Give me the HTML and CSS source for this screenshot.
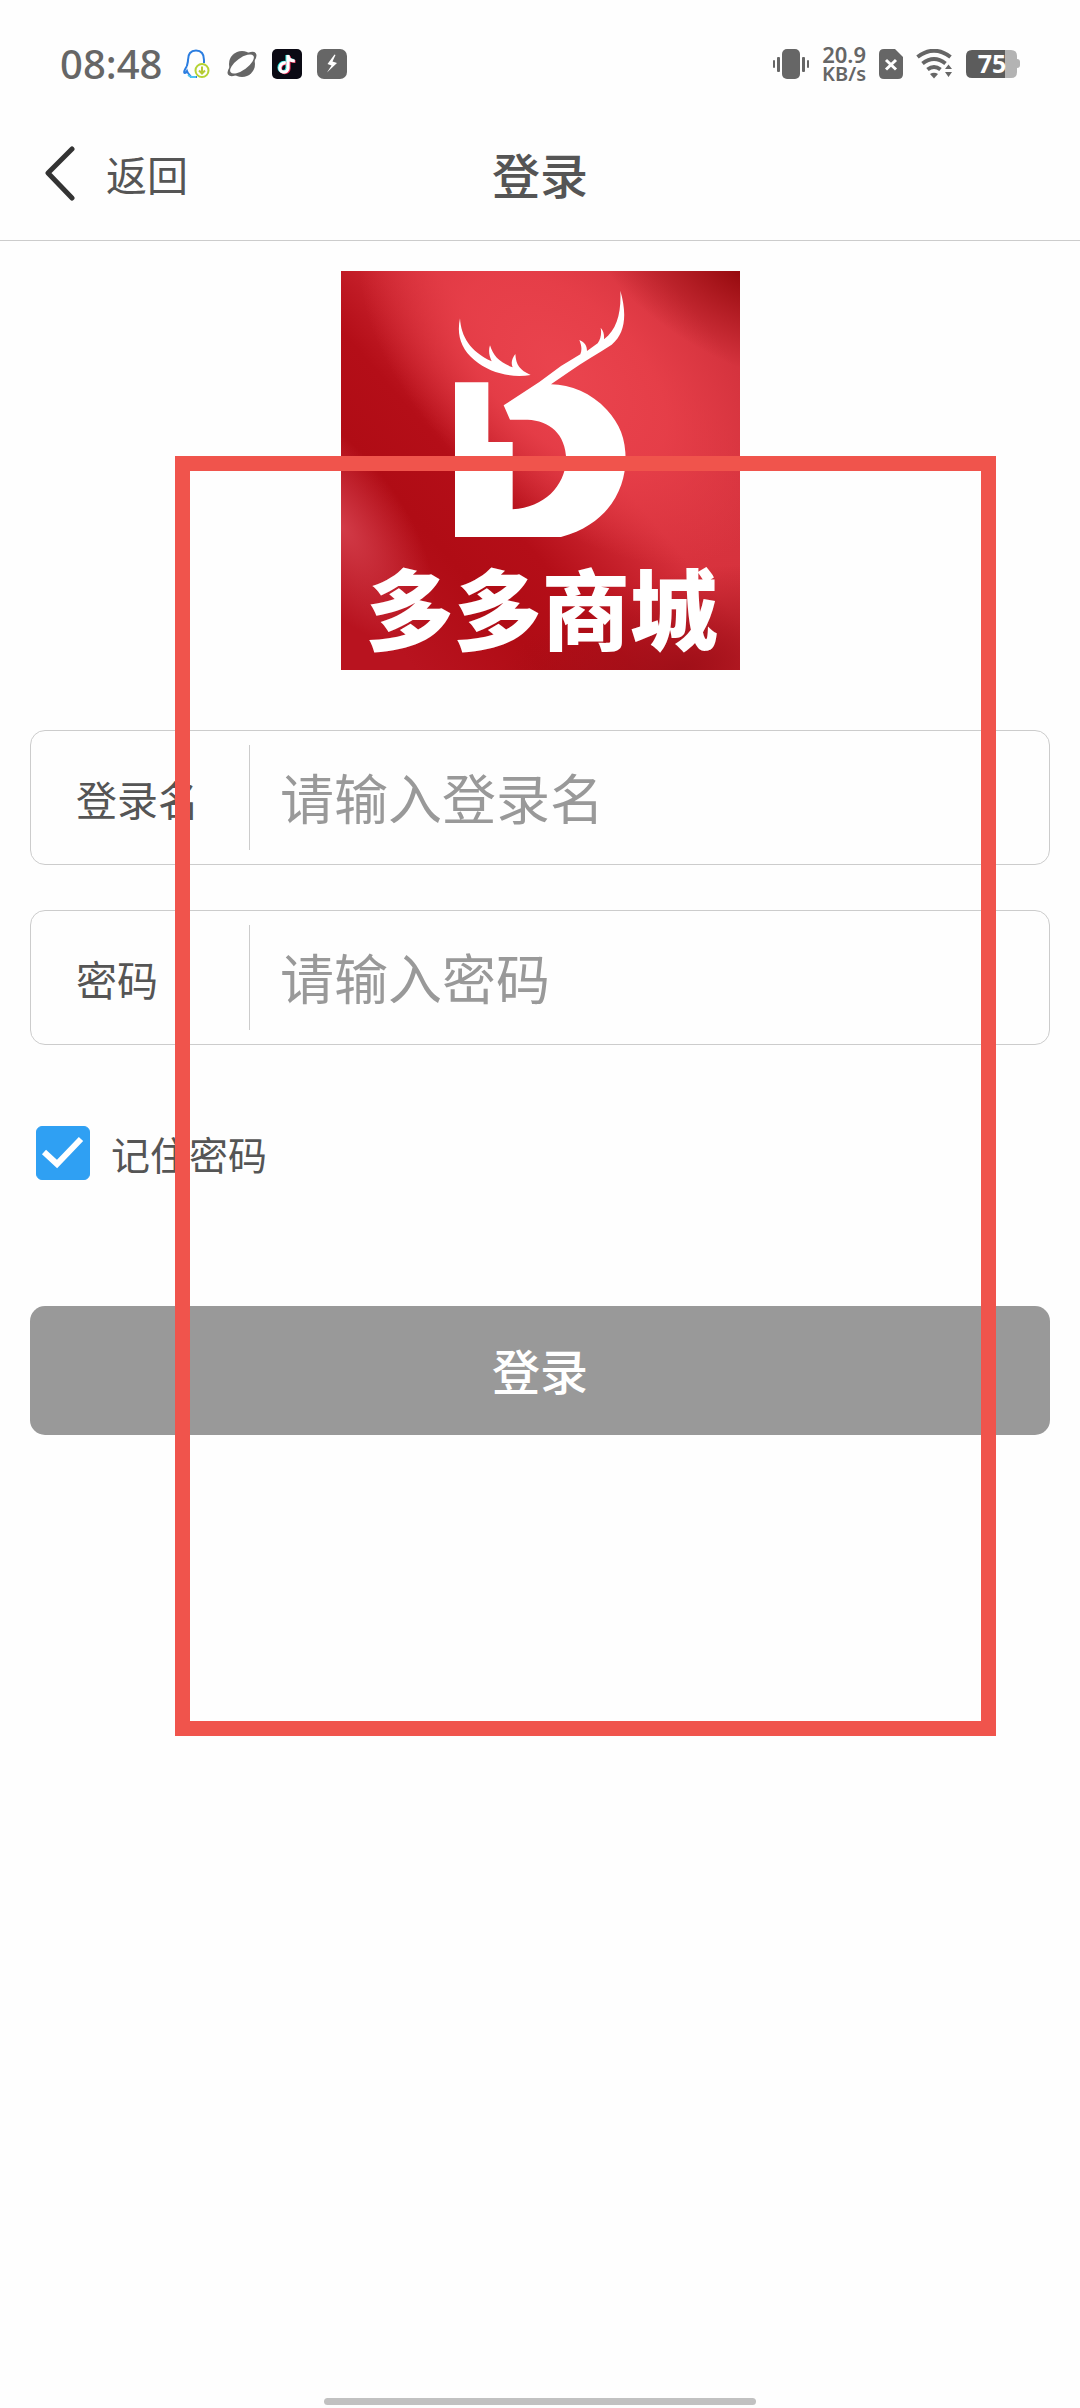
FILE: index.html
```html
<!DOCTYPE html>
<html lang="zh-CN">
<head>
    <meta charset="UTF-8">
    <meta name="viewport" content="width=device-width, initial-scale=1.0">
    <title>登录</title>
    <link rel="stylesheet" href="styles.css">
</head>
<body>
    <div class="status-bar">
        <div class="status-left">
            <span class="time">08:48</span>
            <svg width="30" height="30" viewBox="0 0 30 30" fill="none">
                <path d="M5 17C3 20 1 24 3 24C4 24 5 22 5 22C6 25 8 26 9 28H15M5 17C5 15 6 14 6 11C6 5 9 1.500 14 1.500C19.500 1.500 22 5 22 11V14" stroke="#2b7de0" stroke-width="2"/>
                <path d="M6 26L9 28H14" stroke="#4cc3f0" stroke-width="2"/>
                <circle cx="20" cy="21.500" r="6.500" fill="#fefefe" stroke="#b5d334" stroke-width="2"/>
                <path d="M20 17.500V24M17 21.500L20 24.500L23 21.500" stroke="#b5c934" stroke-width="2"/>
            </svg>
            <svg width="30" height="30" viewBox="0 0 30 30">
                <circle cx="15" cy="15" r="13" fill="#666"/>
                <ellipse cx="15" cy="15" rx="17.500" ry="7" transform="rotate(-38 15 15)" fill="#666"/>
                <ellipse cx="15" cy="15" rx="14" ry="6" transform="rotate(-36 15 15)" fill="#fefefe"/>
            </svg>
            <svg width="30" height="30" viewBox="0 0 30 30" fill="none" stroke-width="3.200">
                <rect width="30" height="30" rx="5" fill="#0b0a14"/>
                <path d="M13 13.500C9 13 7 16 7 18.500C7 24 15 24 15 18.500V6C15.500 9.500 18 11.500 22 11.500" stroke="#25e0dc"/>
                <path d="M14.500 14.500C10.500 14 8.500 17 8.500 19.500C8.500 25 17 25 17 19.500V7C17 10.500 19.500 12.500 23.500 12.500" stroke="#f02c56"/>
                <path d="M13.800 14C9.800 13.500 7.800 16.500 7.800 19C7.800 24.500 16 24.500 16 19V6C16 10 18.800 12 22.800 12" stroke="#fff"/>
            </svg>
            <svg width="30" height="30" viewBox="0 0 30 30">
                <rect width="30" height="30" rx="7" fill="#666"/>
                <path d="M17.500 5.500L10.500 15L14.500 16.500L10 23.500L20 14L15.500 12.500L18.500 6Z" fill="#fff"/>
            </svg>
        </div>
        <div class="status-right">
            <svg width="36" height="30" viewBox="0 0 36 30" fill="#666">
                <rect x="9" width="18" height="30" rx="5"/>
                <rect y="11" width="2" height="8" rx="1"/>
                <rect x="4" y="8" width="3" height="15" rx="1"/>
                <rect x="29" y="8" width="3" height="15" rx="1"/>
                <rect x="34" y="11" width="2" height="8" rx="1"/>
            </svg>
            <div class="speed">
                <span>20.9</span>
                <span class="unit">KB/s</span>
            </div>
            <svg width="24" height="30" viewBox="0 0 24 30">
                <path d="M5 0H16L24 8V25Q24 30 19 30H5Q0 30 0 25V5Q0 0 5 0Z" fill="#666"/>
                <path d="M7 11L17 20.500M17 11L7 20.500" stroke="#fff" stroke-width="3"/>
            </svg>
            <svg width="37" height="30" viewBox="0 0 37 30" fill="none" stroke="#666" stroke-width="4">
                <path d="M1.500 8Q18 -4.500 34.500 8"/>
                <path d="M6.500 14.500Q18 5.500 29.500 14.500"/>
                <path d="M11.500 20.500Q18 15.500 24.500 20.500"/>
                <path d="M14 25Q18 22.500 22 25L18 29.500Z" fill="#666" stroke="none"/>
                <path d="M29 20L32.500 15.500L36 20ZM29 23L32.500 28L36 23Z" fill="#666" stroke="none"/>
            </svg>
            <svg width="54" height="28" viewBox="0 0 54 28">
                <path d="M38 0H45Q51 0 51 6V22Q51 28 45 28H38Z" fill="#b3b3b3"/>
                <path d="M51 9Q54 9 54 12V15Q54 18 51 18Z" fill="#b3b3b3"/>
                <path d="M6 0H39V28H6Q0 28 0 22V6Q0 0 6 0Z" fill="#5c5c5c"/>
                <text class="battery-level" x="26" y="23" text-anchor="middle">75</text>
            </svg>
        </div>
    </div>

    <header class="nav">
        <a class="back" href="#">
            <svg width="32" height="56" viewBox="0 0 32 56" fill="none" stroke="#333" stroke-width="5" stroke-linecap="round" stroke-linejoin="round">
                <path d="M28 4L4 28L28 53"/>
            </svg>
            <span>返回</span>
        </a>
        <h1 class="title">登录</h1>
    </header>

    <main class="content">
        <svg class="logo" viewBox="30 33 1197 1197">
            <defs>
                <linearGradient id="base" x1="0.100" y1="0.900" x2="0.850" y2="0.250">
                    <stop offset="0" stop-color="#b8131f"/>
                    <stop offset="0.250" stop-color="#b00c15"/>
                    <stop offset="0.420" stop-color="#b40e18"/>
                    <stop offset="0.700" stop-color="#d8323d"/>
                    <stop offset="1" stop-color="#d5333e"/>
                </linearGradient>
                <radialGradient id="shine" cx="0" cy="0" r="1" gradientTransform="translate(0.560 0.250) rotate(42) scale(0.620 0.340)">
                    <stop offset="0" stop-color="#ea444e"/>
                    <stop offset="0.500" stop-color="#e8404a" stop-opacity="0.850"/>
                    <stop offset="1" stop-color="#e8404a" stop-opacity="0"/>
                </radialGradient>
                <radialGradient id="left" cx="0" cy="0" r="1" gradientTransform="translate(0 0.640) rotate(55) scale(0.340 0.160)">
                    <stop offset="0" stop-color="#d23b48"/>
                    <stop offset="1" stop-color="#d23b48" stop-opacity="0"/>
                </radialGradient>
                <radialGradient id="corner" cx="0" cy="0" r="1" gradientTransform="translate(1 0) rotate(30) scale(0.450 0.220)">
                    <stop offset="0" stop-color="#960a0e"/>
                    <stop offset="1" stop-color="#960a0e" stop-opacity="0"/>
                </radialGradient>
                <radialGradient id="bottom" cx="0" cy="0" r="1" gradientTransform="translate(0.850 1) rotate(-15) scale(0.500 0.240)">
                    <stop offset="0" stop-color="#a00f18"/>
                    <stop offset="1" stop-color="#a00f18" stop-opacity="0"/>
                </radialGradient>
            </defs>
            <rect x="30" y="33" width="1197" height="1197" fill="url(#base)"/>
            <rect x="30" y="33" width="1197" height="1197" fill="url(#shine)"/>
            <rect x="30" y="33" width="1197" height="1197" fill="url(#left)"/>
            <rect x="30" y="33" width="1197" height="1197" fill="url(#corner)"/>
            <rect x="30" y="33" width="1197" height="1197" fill="url(#bottom)"/>
            <g fill="#fff">
                <!-- left antler, then the head with the right one -->
                <path d="M387 175C390 230 418 275 482 304C474 285 472 272 477 256C487 288 505 307 545 322C539 308 543 296 553 282C555 315 566 330 599 345C540 355 475 338 430 300C388 265 377 222 387 175Z"/>
                <path d="M868 92C888 160 884 220 842 254C800 282 755 306 718 333L660 373C720 375 780 398 828 450C866 492 884 535 884 600C882 680 840 790 690 831H372V367H472V546H545V748C640 742 700 680 706 600C704 520 655 482 590 479H537L518 436L625 366L690 318L748 283C754 268 751 255 745 240C762 247 768 258 768 273L800 250C810 235 812 220 809 203C818 213 820 225 819 238C858 207 871 160 868 92Z"/>
            </g>
            <text class="logo-text" x="632" y="1150" text-anchor="middle">多多商城</text>
        </svg>

        <form class="login-form" onsubmit="return false">
            <div class="field">
                <label for="username">登录名</label>
                <input type="text" id="username" placeholder="请输入登录名">
            </div>
            <div class="field">
                <label for="password">密码</label>
                <input type="password" id="password" placeholder="请输入密码">
            </div>
            <label class="remember">
                <span class="check">
                    <input type="checkbox" checked>
                    <svg viewBox="0 0 54 54" fill="none" stroke="#fff" stroke-width="6">
                        <path d="M8 26L21 38L45 13"/>
                    </svg>
                </span>
                记住密码
            </label>
            <button class="submit" type="submit">登录</button>
        </form>
    </main>

    <div class="home-bar"></div>
    <div class="marker"></div>
</body>
</html>
```
FILE: styles.css
```css
* {
    box-sizing: border-box;
}
body {
    position: relative;
    display: flex;
    flex-direction: column;
    min-height: 100vh;
    margin: 0;
    background-color: #fefefe;
    color: #555;
    font-family: "Noto Sans CJK SC", sans-serif;
}
svg {
    display: block;
}

/* status bar */
.status-bar {
    display: flex;
    justify-content: space-between;
    align-items: center;
    height: 112px;
    padding: 16px 60px 0;
    color: #666;
    font-family: "Noto Sans", sans-serif;
}
.status-left {
    display: flex;
    align-items: center;
    gap: 15px;
}
.status-right {
    display: flex;
    align-items: center;
    gap: 13px;
}
.time {
    margin-right: 5px;
    font-size: 40px;
    font-weight: 500;
    line-height: 40px;
}
.speed {
    display: flex;
    flex-direction: column;
    align-items: flex-end;
    font-size: 22px;
    font-weight: 600;
    line-height: 20px;
}
.unit {
    font-size: 20px;
}
.battery-level {
    fill: #fff;
    font-size: 25px;
    font-weight: 700;
}

/* header */
.nav {
    display: grid;
    grid-template-columns: 1fr auto 1fr;
    align-items: center;
    height: 129px;
    padding: 0 44px 6px;
    border-bottom: 1px solid #ccc;
}
.back {
    display: flex;
    align-items: center;
    gap: 30px;
    color: #555;
    font-size: 41px;
    line-height: 60px;
    text-decoration: none;
}
.title {
    margin: 0;
    font-size: 48px;
    font-weight: 500;
    line-height: 60px;
}

/* login */
.content {
    padding: 30px;
}
.logo {
    width: 399px;
    margin: 0 auto 60px;
}
.logo-text {
    fill: #fff;
    font-size: 264px;
    font-weight: 900;
}
.login-form {
    display: flex;
    flex-direction: column;
}
.field {
    display: flex;
    height: 135px;
    margin-bottom: 45px;
    padding: 14px 0;
    border: 1px solid #ccc;
    border-radius: 15px;
}
.field label {
    display: flex;
    align-items: center;
    width: 219px;
    padding-left: 45px;
    border-right: 1px solid #ccc;
    font-size: 41px;
}
.field input {
    flex: 1;
    min-width: 0;
    padding: 0 30px 2px;
    border: none;
    outline: none;
    background: none;
    color: #555;
    font-family: inherit;
    font-size: 54px;
}
.field input::placeholder {
    color: #999;
    opacity: 1;
}
.remember {
    display: flex;
    align-items: center;
    align-self: flex-start;
    gap: 21px;
    height: 54px;
    margin: 36px 6px 126px;
    font-size: 39px;
}
.check {
    display: grid;
    width: 54px;
    height: 54px;
}
.check input {
    grid-area: 1 / 1;
    appearance: none;
    width: 100%;
    height: 100%;
    margin: 0;
    border: 1px solid #ccc;
    border-radius: 6px;
}
.check input:checked {
    border-color: #2fa0f3;
    background-color: #2fa0f3;
}
.check svg {
    grid-area: 1 / 1;
    visibility: hidden;
    pointer-events: none;
}
.check input:checked + svg {
    visibility: visible;
}
.submit {
    height: 129px;
    padding-bottom: 4px;
    border: none;
    border-radius: 15px;
    background-color: #999;
    color: #fff;
    font-family: inherit;
    font-size: 48px;
    font-weight: 500;
}

.home-bar {
    width: 40%;
    height: 7px;
    margin: auto auto 3px;
    border-radius: 4px;
    background-color: #c1c1c1;
}

/* red frame drawn over the page */
.marker {
    position: absolute;
    top: 456px;
    left: 175px;
    right: 84px;
    height: 1280px;
    border: 15px solid #f0544c;
    pointer-events: none;
}
```
